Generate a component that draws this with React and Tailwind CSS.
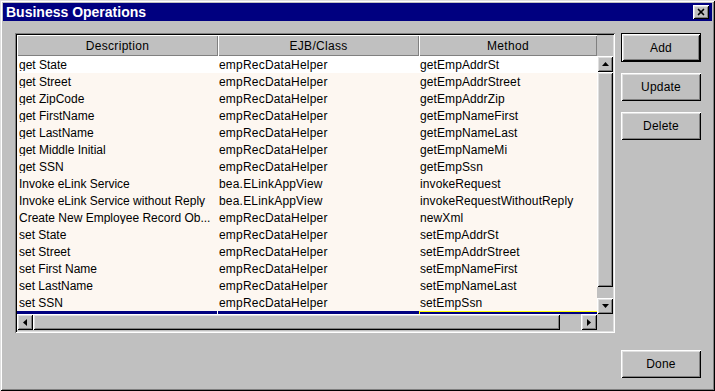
import { X } from 'lucide-react'

const rows = [
  ['get State', 'empRecDataHelper', 'getEmpAddrSt'],
  ['get Street', 'empRecDataHelper', 'getEmpAddrStreet'],
  ['get ZipCode', 'empRecDataHelper', 'getEmpAddrZip'],
  ['get FirstName', 'empRecDataHelper', 'getEmpNameFirst'],
  ['get LastName', 'empRecDataHelper', 'getEmpNameLast'],
  ['get Middle Initial', 'empRecDataHelper', 'getEmpNameMi'],
  ['get SSN', 'empRecDataHelper', 'getEmpSsn'],
  ['Invoke eLink Service', 'bea.ELinkAppView', 'invokeRequest'],
  ['Invoke eLink Service without Reply', 'bea.ELinkAppView', 'invokeRequestWithoutReply'],
  ['Create New Employee Record Ob...', 'empRecDataHelper', 'newXml'],
  ['set State', 'empRecDataHelper', 'setEmpAddrSt'],
  ['set Street', 'empRecDataHelper', 'setEmpAddrStreet'],
  ['set First Name', 'empRecDataHelper', 'setEmpNameFirst'],
  ['set LastName', 'empRecDataHelper', 'setEmpNameLast'],
  ['set SSN', 'empRecDataHelper', 'setEmpSsn'],
]

const raised = 'bg-[#c0c0c0] shadow-[inset_1px_1px_0_#ffffff,inset_-1px_-1px_0_#000000,inset_2px_2px_0_#dfdfdf,inset_-2px_-2px_0_#808080]'
const header = 'bg-[#c0c0c0] shadow-[inset_1px_1px_0_#ffffff,inset_-1px_-1px_0_#808080]'

function Arrow({ dir }) {
  const pts = {
    up: '0,4 3.5,0 7,4',
    down: '0,0 3.5,4 7,0',
    left: '4,0 0,3.5 4,7',
    right: '0,0 4,3.5 0,7',
  }[dir]
  const vertical = dir === 'up' || dir === 'down'
  return (
    <svg width={vertical ? 7 : 4} height={vertical ? 4 : 7}>
      <polygon points={pts} fill="#000" />
    </svg>
  )
}

function Btn({ label, primary, className = '' }) {
  return (
    <div className={`w-[80px] flex ${primary ? 'border border-black' : ''} ${className}`}>
      <div className={`flex-1 flex items-center justify-center text-[12px] tracking-[0.2px] ${raised}`}>{label}</div>
    </div>
  )
}

export default function App() {
  return (
    <div
      className="w-[715px] h-[391px] bg-[#c0c0c0] p-[3px] flex flex-col text-black shadow-[inset_1px_1px_0_#dfdfdf,inset_-1px_-1px_0_#000000,inset_2px_2px_0_#ffffff,inset_-2px_-2px_0_#808080]"
      style={{ fontFamily: '"Liberation Sans", Arial, sans-serif' }}
    >
      {/* Title bar */}
      <div className="h-[18px] bg-[#000080] flex items-center justify-between pl-[3px] pr-[3px]">
        <span className="text-white font-bold text-[14px] leading-none">Business Operations</span>
        <div className={`w-[16px] h-[14px] flex items-center justify-center ${raised}`}>
          <X className="w-[10px] h-[10px]" strokeWidth={4} color="#000" />
        </div>
      </div>

      <div className="flex flex-1 pt-[12px] pl-[12px] pr-[11px] pb-[10px]">
        {/* Table panel */}
        <div className="w-[600px] h-[300px] p-[2px] shadow-[inset_1px_1px_0_#808080,inset_-1px_-1px_0_#ffffff,inset_2px_2px_0_#000000,inset_-2px_-2px_0_#dfdfdf]">
          <div className="flex flex-col">
            <div className="flex h-[21px]">
              <div className={`w-[201px] flex items-center justify-center text-[12px] tracking-[0.3px] ${header}`}>Description</div>
              <div className={`w-[201px] flex items-center justify-center text-[12px] tracking-[0.3px] ${header}`}>EJB/Class</div>
              <div className={`w-[178px] flex items-center justify-center text-[12px] tracking-[0.3px] ${header}`}>Method</div>
              <div className="w-[16px] bg-[#c0c0c0]" />
            </div>

            <div className="flex h-[258px]">
              <div className="w-[580px] flex flex-col bg-[#fdf7f1]">
                {rows.map((r, i) => (
                  <div key={i} className={`flex h-[17px] items-center text-[12px] leading-none pt-[1px] ${i === 0 ? 'bg-white' : ''}`}>
                    <span className="w-[201px] pl-[2px] whitespace-nowrap overflow-hidden">{r[0]}</span>
                    <span className="w-[201px] pl-[1px] whitespace-nowrap tracking-[0.2px]">{r[1]}</span>
                    <span className="w-[178px] pl-[1px] whitespace-nowrap tracking-[0.1px]">{r[2]}</span>
                  </div>
                ))}
                <div className="flex h-[3px]">
                  <div className="w-[200px] bg-[#000080]" />
                  <div className="w-[1px] bg-white" />
                  <div className="w-[201px] bg-[#000080]" />
                  <div className="w-[178px] bg-[#000080] border-l border-t border-[#ffff00]" />
                </div>
              </div>
              {/* Vertical scrollbar */}
              <div className="w-[16px] flex flex-col bg-[#c0c0c0]">
                <div className={`h-[16px] flex items-center justify-center ${raised}`}><Arrow dir="up" /></div>
                <div className={`h-[215px] ${raised}`} />
                <div className="flex-1" />
                <div className={`h-[16px] flex items-center justify-center ${raised}`}><Arrow dir="down" /></div>
              </div>
            </div>

            {/* Horizontal scrollbar */}
            <div className="flex h-[16px]">
              <div className="w-[580px] flex bg-[#c0c0c0]">
                <div className={`w-[16px] flex items-center justify-center ${raised}`}><Arrow dir="left" /></div>
                <div className={`w-[527px] ${raised}`} />
                <div className="flex-1" />
                <div className={`w-[16px] flex items-center justify-center ${raised}`}><Arrow dir="right" /></div>
              </div>
              <div className="w-[16px] bg-[#c0c0c0]" />
            </div>
          </div>
        </div>

        {/* Buttons */}
        <div className="flex flex-col ml-[6px]">
          <Btn label="Add" primary className="h-[29px]" />
          <Btn label="Update" className="h-[28px] mt-[11px]" />
          <Btn label="Delete" className="h-[28px] mt-[11px]" />
          <div className="flex-1" />
          <Btn label="Done" className="h-[28px]" />
        </div>
      </div>
    </div>
  )
}
